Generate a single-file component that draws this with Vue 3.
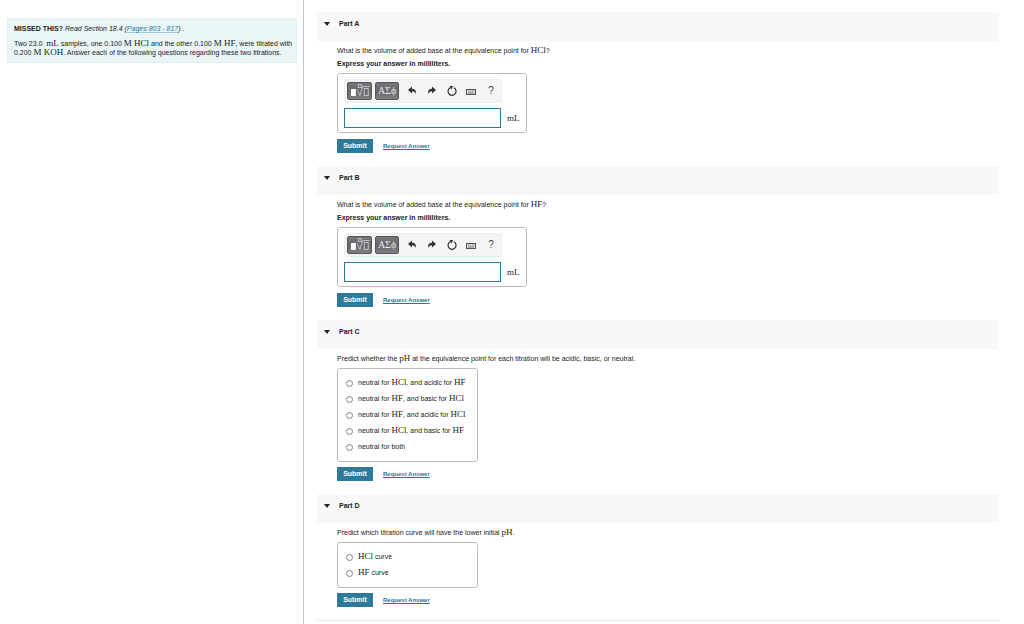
<script setup>
import { ref } from 'vue'

const parts = ref([
  { id: 'A', open: true, compound: 'HCl', answer: '' },
  { id: 'B', open: true, compound: 'HF', answer: '' },
  {
    id: 'C',
    open: true,
    prompt: [{ t: 'Predict whether the ' }, { m: 'pH' }, { t: ' at the equivalence point for each titration will be acidic, basic, or neutral.' }],
    choice: null,
    options: [
      [{ t: 'neutral for ' }, { m: 'HCl' }, { t: ', and acidic for ' }, { m: 'HF' }],
      [{ t: 'neutral for ' }, { m: 'HF' }, { t: ', and basic for ' }, { m: 'HCl' }],
      [{ t: 'neutral for ' }, { m: 'HF' }, { t: ', and acidic for ' }, { m: 'HCl' }],
      [{ t: 'neutral for ' }, { m: 'HCl' }, { t: ', and basic for ' }, { m: 'HF' }],
      [{ t: 'neutral for both' }]
    ]
  },
  {
    id: 'D',
    open: true,
    prompt: [{ t: 'Predict which titration curve will have the lower initial ' }, { m: 'pH' }, { t: '.' }],
    choice: null,
    options: [
      [{ m: 'HCl' }, { t: ' curve' }],
      [{ m: 'HF' }, { t: ' curve' }]
    ]
  }
])
</script>

<template>
  <div class="page">
    <aside class="side">
      <div class="intro">
        <p><strong>MISSED THIS?</strong> <em>Read Section 18.4 (<a href="#pages">Pages 803 - 817</a>)</em> .</p>
        <p class="problem">
          Two 23.0 &nbsp;<span class="m">mL</span> samples, one 0.100 <span class="m">M HCl</span> and the other 0.100
          <span class="m">M HF</span>, were titrated with 0.200 <span class="m">M KOH</span>. Answer each of the following
          questions regarding these two titrations.
        </p>
      </div>
    </aside>

    <main class="main">
      <section v-for="part in parts" :key="part.id" class="part">
        <h2 class="head">
          <button type="button" class="toggle" :aria-expanded="part.open" @click="part.open = !part.open">
            <svg class="caret" viewBox="0 0 6 4" aria-hidden="true"><path d="M0 0h6L3 4z" /></svg>
            Part {{ part.id }}
          </button>
        </h2>

        <form v-if="part.open" class="body" @submit.prevent>
          <template v-if="part.compound">
            <p>What is the volume of added base at the equivalence point for <span class="m">{{ part.compound }}</span>?</p>
            <p class="express"><label :for="'answer-' + part.id">Express your answer in milliliters.</label></p>
            <div class="box entry">
              <div class="tools">
                <button type="button" class="dark" aria-label="Templates">
                  <svg class="templates" viewBox="0 0 23 16" aria-hidden="true">
                    <rect x="3" y="6" width="5" height="7" fill="#fff" />
                    <g fill="none" stroke="#c4c4c6">
                      <rect x="10.500" y="1.500" width="3" height="3" />
                      <path d="M9.500 6.500l2.500 6 3-9h7" />
                      <rect x="16.500" y="5.500" width="4" height="7" />
                    </g>
                  </svg>
                </button>
                <button type="button" class="dark greek" aria-label="Symbols">ΑΣϕ</button>
                <button type="button" class="tool" aria-label="Undo">
                  <svg viewBox="0 0 12 12" aria-hidden="true"><path d="M2 5l4-3.500v2.200c3 0 4.300 1.800 3.900 5.300C9 7.200 8 6.300 6 6.300v2.200z" fill="#333" /></svg>
                </button>
                <button type="button" class="tool" aria-label="Redo">
                  <svg viewBox="0 0 12 12" aria-hidden="true"><path d="M10 5L6 1.500v2.200C3 3.700 1.700 5.500 2.100 9 3 7.200 4 6.300 6 6.300v2.200z" fill="#333" /></svg>
                </button>
                <button type="button" class="tool" aria-label="Reset">
                  <svg viewBox="0 0 12 12" aria-hidden="true">
                    <path d="M8 2.800A4 4 0 1 1 4.500 2.600" fill="none" stroke="#333" stroke-width="1.200" />
                    <path d="M3.500 1h3.500L5.700 4.400z" fill="#333" />
                  </svg>
                </button>
                <button type="button" class="tool" aria-label="Keyboard shortcuts">
                  <svg viewBox="0 0 12 12" aria-hidden="true">
                    <rect x="1.500" y="4.500" width="9" height="5" fill="#ddd" stroke="#555" />
                    <path d="M3 6h6.500" stroke="#777" stroke-dasharray="1 1" />
                    <path d="M3 8h6" stroke="#777" />
                  </svg>
                </button>
                <button type="button" class="tool help" aria-label="Help">?</button>
              </div>
              <div class="field">
                <input :id="'answer-' + part.id" v-model="part.answer" type="text" />
                <span class="m">mL</span>
              </div>
            </div>
          </template>

          <template v-else>
            <p :id="'prompt-' + part.id">
              <template v-for="(s, i) in part.prompt" :key="i"><span v-if="s.m" class="m">{{ s.m }}</span><template v-else>{{ s.t }}</template></template>
            </p>
            <div class="box choices" role="radiogroup" :aria-labelledby="'prompt-' + part.id">
              <label v-for="(option, n) in part.options" :key="n">
                <input v-model="part.choice" type="radio" :name="'choice-' + part.id" :value="n" />
                <span><template v-for="(s, i) in option" :key="i"><span v-if="s.m" class="m">{{ s.m }}</span><template v-else>{{ s.t }}</template></template></span>
              </label>
            </div>
          </template>

          <div class="actions">
            <button type="submit" class="submit">Submit</button>
            <a href="#request" class="request">Request Answer</a>
          </div>
        </form>
      </section>
    </main>
  </div>
</template>

<style>
body {
  margin: 0;
  background: #fff;
}
</style>

<style scoped>
.page {
  display: grid;
  grid-template-columns: 303px 1fr;
  min-height: 100vh;
  box-sizing: border-box;
  font: 7px/12px "Liberation Sans", Arial, sans-serif;
  color: #222;
}
.page * {
  box-sizing: border-box;
}
p,
h2 {
  margin: 0;
}
button {
  font: inherit;
  color: inherit;
  padding: 0;
  border: 0;
  background: none;
  cursor: pointer;
}
a {
  color: #24779c;
}
.m {
  font-family: "Liberation Serif", "Times New Roman", serif;
  font-size: 9px;
  line-height: 8px;
}
.side {
  padding: 18px 6px 0 7px;
}
.intro {
  background: #e9f5f7;
  border: 1px solid #e1f0f3;
  padding: 4px 2px 5px 6px;
}
.intro a {
  text-decoration-color: #9cc9dc;
}
.problem {
  margin-top: 4px;
  line-height: 9px;
}
.main {
  border-left: 1px solid #c3c9d3;
  padding: 12px 25px 3px 13px;
}
.part:last-child {
  border-bottom: 1px solid #e6e6e6;
}
.head {
  background: #f8f8f8;
  height: 29px;
  display: flex;
  font-size: 7px;
}
.toggle {
  flex: 1;
  display: flex;
  align-items: center;
  gap: 9px;
  padding: 0 7px 5px;
  font-weight: bold;
  text-align: left;
}
.caret {
  width: 6px;
  height: 4px;
  fill: #222;
}
.body {
  padding: 4px 0 13px 20px;
}
.express {
  font-weight: bold;
  margin-top: 1px;
}
.box {
  border: 1px solid #bbb;
  border-radius: 3px;
  margin-top: 3px;
}
.entry {
  width: 190px;
  height: 60px;
  padding: 5px 6px;
}
.tools {
  width: 158px;
  height: 24px;
  display: flex;
  align-items: center;
  padding-left: 2px;
  background: #f4f4f4;
  border: 1px solid #eee;
  border-radius: 3px;
}
.dark {
  width: 25px;
  height: 18px;
  margin-right: 3px;
  border: 1px solid #56565a;
  border-radius: 2px;
  background: linear-gradient(#77777b, #67676b 50%, #7e7e82);
  color: #e8e8e8;
}
.templates {
  display: block;
  width: 100%;
  height: 100%;
}
.greek {
  font: 10px/14px "Liberation Serif", serif;
}
.tool {
  width: 20px;
  height: 18px;
  display: flex;
  align-items: center;
  justify-content: center;
}
.tool svg {
  width: 12px;
  height: 12px;
}
.help {
  font-size: 10px;
  color: #444;
}
.field {
  display: flex;
  align-items: center;
  gap: 6px;
  margin-top: 5px;
}
.field input {
  width: 157px;
  height: 20px;
  padding: 0 4px;
  border: 1px solid #2e7a9a;
  border-radius: 0;
  background: #fff;
  font-size: 9px;
}
.choices {
  width: 141px;
  padding: 6px 8px;
}
.choices label {
  display: flex;
  align-items: center;
  gap: 5px;
  height: 16px;
}
.choices input {
  appearance: none;
  width: 7px;
  height: 7px;
  margin: 0;
  border: 1px solid #858585;
  border-radius: 50%;
  background: #fff;
}
.choices input:checked {
  background: #2f7a9b;
}
.actions {
  display: flex;
  align-items: center;
  gap: 10px;
  margin-top: 6px;
}
.choices + .actions {
  margin-top: 5px;
}
.submit {
  width: 36px;
  height: 14px;
  background: #2f7a9b;
  color: #fff;
  font-weight: bold;
}
.request {
  font-size: 6px;
  font-weight: bold;
}
</style>
